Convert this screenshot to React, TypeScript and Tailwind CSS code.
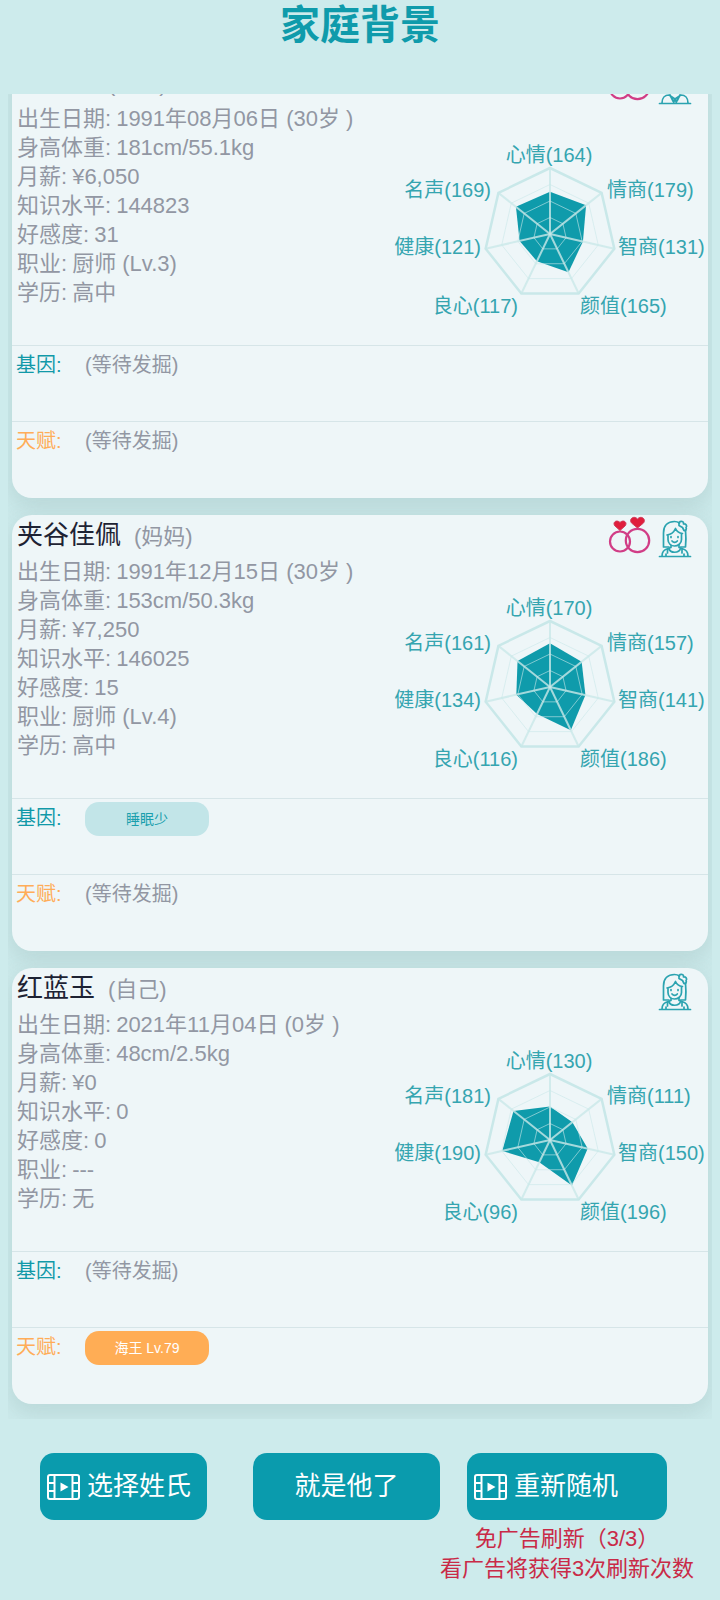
import type { ReactNode } from 'react'

interface Person {
  name:   string
  role:   string
  female: boolean
  rings:  boolean
  facts:  [string, string][]
  stats:  number[]
  gene?:   string
  talent?: string
}

const PEOPLE: Person[] = [
  {
    name: '红启华', role: '爸爸', female: false, rings: true,
    facts: [
      ['出生日期', '1991年08月06日 (30岁 )'],
      ['身高体重', '181cm/55.1kg'],
      ['月薪', '¥6,050'],
      ['知识水平', '144823'],
      ['好感度', '31'],
      ['职业', '厨师 (Lv.3)'],
      ['学历', '高中'],
    ],
    stats: [164, 179, 131, 165, 117, 121, 169],
  },
  {
    name: '夹谷佳佩', role: '妈妈', female: true, rings: true,
    facts: [
      ['出生日期', '1991年12月15日 (30岁 )'],
      ['身高体重', '153cm/50.3kg'],
      ['月薪', '¥7,250'],
      ['知识水平', '146025'],
      ['好感度', '15'],
      ['职业', '厨师 (Lv.4)'],
      ['学历', '高中'],
    ],
    stats: [170, 157, 141, 186, 116, 134, 161],
    gene: '睡眠少',
  },
  {
    name: '红蓝玉', role: '自己', female: true, rings: false,
    facts: [
      ['出生日期', '2021年11月04日 (0岁 )'],
      ['身高体重', '48cm/2.5kg'],
      ['月薪', '¥0'],
      ['知识水平', '0'],
      ['好感度', '0'],
      ['职业', '---'],
      ['学历', '无'],
    ],
    stats: [130, 111, 150, 196, 96, 190, 181],
    talent: '海王 Lv.79',
  },
]

// label position around the chart, clockwise from the top
const AXES = [
  { name: '心情', x: 159, y: 22,  anchor: 'middle' },
  { name: '情商', x: 217, y: 57,  anchor: 'start' },
  { name: '智商', x: 228, y: 114, anchor: 'start' },
  { name: '颜值', x: 190, y: 173, anchor: 'start' },
  { name: '良心', x: 128, y: 173, anchor: 'end' },
  { name: '健康', x: 91,  y: 114, anchor: 'end' },
  { name: '名声', x: 101, y: 57,  anchor: 'end' },
] as const

const CX = 160
const CY = 94
const RADIUS = 66
const MAX = 256

const point = (i: number, r: number) => {
  const a = (i * 2 * Math.PI) / 7
  return [CX + r * Math.sin(a), CY - r * Math.cos(a)]
}
const ring = (r: number) => AXES.map((_, i) => point(i, r).join(',')).join(' ')

export default function App() {
  return (
    <div className="h-screen flex flex-col bg-[#cdebec] font-['Liberation_Sans','Noto_Sans_CJK_SC',sans-serif]">
      <h1 className="h-[94px] shrink-0 text-center text-[40px] leading-[50px] font-bold text-[#0f9bab]">家庭背景</h1>

      {/* Scrolled to the last card */}
      <main className="flex-1 min-h-0 overflow-hidden mx-2 px-1 pb-[15px] flex flex-col justify-end gap-[17px]">
        {PEOPLE.map(p => <PersonCard key={p.name} person={p} />)}
      </main>

      <footer className="h-[181px] shrink-0 pt-[34px] pl-10 pr-[53px] flex items-start">
        <Button className="grow basis-[167px] justify-start pl-[7px]"><FilmIcon />选择姓氏</Button>
        <Button className="grow basis-[187px] justify-center ml-[46px]">就是他了</Button>
        <div className="grow basis-[200px] min-w-0 ml-[27px] flex flex-col items-center">
          <Button className="w-full justify-start pl-[7px]"><FilmIcon />重新随机</Button>
          <p className="pt-1 text-center text-[22px] leading-[30px] whitespace-nowrap text-[#c92a47]">
            免广告刷新（3/3）<br />看广告将获得3次刷新次数
          </p>
        </div>
      </footer>
    </div>
  )
}

function PersonCard({ person }: { person: Person }) {
  return (
    <section className="shrink-0 h-[436px] rounded-[20px] bg-[#eef6f8] shadow-[0_8px_20px_4px_rgba(150,180,180,0.3)]">
      <div className="h-[283px]">
        <div className="h-[42px] pl-[5px] pr-4 flex items-start justify-between">
          <h2 className="text-[26px] leading-[40px] text-[#1d2233]">
            {person.name}
            <span className="ml-[13px] text-[22px] text-[#9297a3]">({person.role})</span>
          </h2>
          <div className="flex gap-1.5">
            {person.rings && <RingsIcon />}
            {person.female ? <GirlIcon /> : <BoyIcon />}
          </div>
        </div>
        <div className="pl-[5px] flex items-start justify-between">
          <dl className="text-[22px] leading-[29px] text-[#9297a3] whitespace-nowrap">
            {person.facts.map(([label, value]) => (
              <div key={label} className="flex gap-[5px]">
                <dt>{label}:</dt>
                <dd>{value}</dd>
              </div>
            ))}
          </dl>
          <RadarChart stats={person.stats} />
        </div>
      </div>

      <TraitRow label="基因" labelClass="text-[#1199a8]">
        {person.gene && <Tag className="bg-[#c2e5e8] text-[#1a9fad]">{person.gene}</Tag>}
      </TraitRow>
      <TraitRow label="天赋" labelClass="text-[#ffad58]">
        {person.talent && <Tag className="bg-[#ffad55] text-white">{person.talent}</Tag>}
      </TraitRow>
    </section>
  )
}

function TraitRow({ label, labelClass, children }: { label: string; labelClass: string; children?: ReactNode }) {
  return (
    <div className="h-[76px] border-t border-[#d6e5e8] pl-1 flex items-start text-[20px] leading-[38px]">
      <h3 className={`w-[69px] shrink-0 ${labelClass}`}>{label}:</h3>
      {children || <span className="text-[#9297a3]">(等待发掘)</span>}
    </div>
  )
}

function Tag({ className, children }: { className: string; children: ReactNode }) {
  return (
    <span className={`mt-[3px] w-[124px] h-[34px] rounded-[14px] text-center text-[14px] leading-[34px] ${className}`}>
      {children}
    </span>
  )
}

function Button({ className, children }: { className: string; children: ReactNode }) {
  return (
    <button
      type="button"
      className={`h-[67px] rounded-[14px] bg-[#0a9bad] text-white text-[26px] flex items-center gap-[7px] whitespace-nowrap ${className}`}
    >
      {children}
    </button>
  )
}

function RadarChart({ stats }: { stats: number[] }) {
  const shape = stats.map((v, i) => point(i, (v / MAX) * RADIUS).join(',')).join(' ')

  return (
    <svg width="318" height="226" viewBox="0 -36 318 226" className="shrink-0" fill="none">
      <polygon points={shape} fill="#0f9bab" />
      <g stroke="#c9e8e9">
        {[0.25, 0.5, 0.75].map(k => <polygon key={k} points={ring(RADIUS * k)} strokeOpacity="0.6" />)}
        <polygon points={ring(RADIUS)} strokeWidth="2.5" />
        {AXES.map((a, i) => {
          const [x, y] = point(i, RADIUS)
          return <line key={a.name} x1={CX} y1={CY} x2={x} y2={y} strokeWidth="2" strokeOpacity="0.8" />
        })}
      </g>
      <g fill="#35a5b0" fontSize="20">
        {AXES.map((a, i) => (
          <text key={a.name} x={a.x} y={a.y} textAnchor={a.anchor}>{a.name}({stats[i]})</text>
        ))}
      </g>
    </svg>
  )
}

function RingsIcon() {
  return (
    <svg width="44" height="42" viewBox="0 0 44 42" fill="none" stroke="#d13d86" strokeWidth="2.2">
      <circle cx="12" cy="26.5" r="10" />
      <circle cx="29.5" cy="25.5" r="11.7" />
      <g fill="#e01e3c" stroke="#d13d5c" strokeWidth="1">
        <path d="M12 15.500 7 11C4 7.500 8.500 4 12 7.500c3.500-3.500 8 0 5 3.500z" />
        <path d="M29.500 13 23.500 8C20.500 4 26 0 29.500 4c3.500-4 9 0 6 4z" />
      </g>
    </svg>
  )
}

function GirlIcon() {
  return (
    <svg width="34" height="43" viewBox="0 0 34 43" fill="none" stroke="#2ba3b0" strokeWidth="1.700" strokeLinecap="round" strokeLinejoin="round">
      {/* bob hair */}
      <path d="M11 32H5.500V18C5.500 10.500 10 6.500 16.500 6.500c2 0 3.500.5 5 1.500M27.500 15c.5 5 .5 12 0 17H22.500" />
      {/* fringe and face */}
      <path d="M9 20c4-.5 7-3 8.500-6.500 1 2.500 3 4.500 7 5M10 20v4.500c0 4 3 6.500 6.500 6.500s7-2.500 7-6.500V19" />
      <path d="M13 21.500v1M20 21.500v1M14 26c1.500 1.800 3.800 1.800 5.300 0" />
      {/* bow */}
      <path d="M21 7.500c2-2 5-1 4.500 1.500 2.500-.5 4 2 2.500 3.500 1 2-.5 3.500-2 3l-1.500-3-3.500-2z" />
      {/* shoulders */}
      <path d="M1.500 41.500h31M4 41c0-4.500 2-6.500 6-7.500l3-1v-2M30 41c0-4.500-2-6.500-6-7.500l-3-1v-2M9.500 34v4M24 34v4M11 33.500c1 5 10 5 11.500 0M8 41v-2M26 41v-2" />
    </svg>
  )
}

function BoyIcon() {
  return (
    <svg width="34" height="43" viewBox="0 0 34 43" fill="none" stroke="#2ba3b0" strokeWidth="1.700" strokeLinecap="round" strokeLinejoin="round">
      <path d="M8 20V14c0-5 4-8 9-8s9 3 9 8v6M10 17v5c0 5 3 8 7 8s7-3 7-8v-5c-5 0-9-1-11-4l-3 4" />
      <path d="M1.500 41.500h31M4 41c0-5 3-8 7-8l6 4 6-4c4 0 7 3 7 8M12 33l3 6 2-2 2 2 3-6M15.500 41l1.500-4 1.500 4" />
    </svg>
  )
}

function FilmIcon() {
  return (
    <svg width="33" height="26" viewBox="0 0 33 26" fill="none" stroke="currentColor" strokeWidth="2">
      <rect x="1" y="1" width="31" height="24" rx="2" />
      <path d="M7.500 1v24M25.500 1v24M1 9h6.500M1 17h6.500M25.500 9H32M25.500 17H32" />
      <path d="M13.500 8.500l8 4.500-8 4.500z" fill="currentColor" stroke="none" />
    </svg>
  )
}
